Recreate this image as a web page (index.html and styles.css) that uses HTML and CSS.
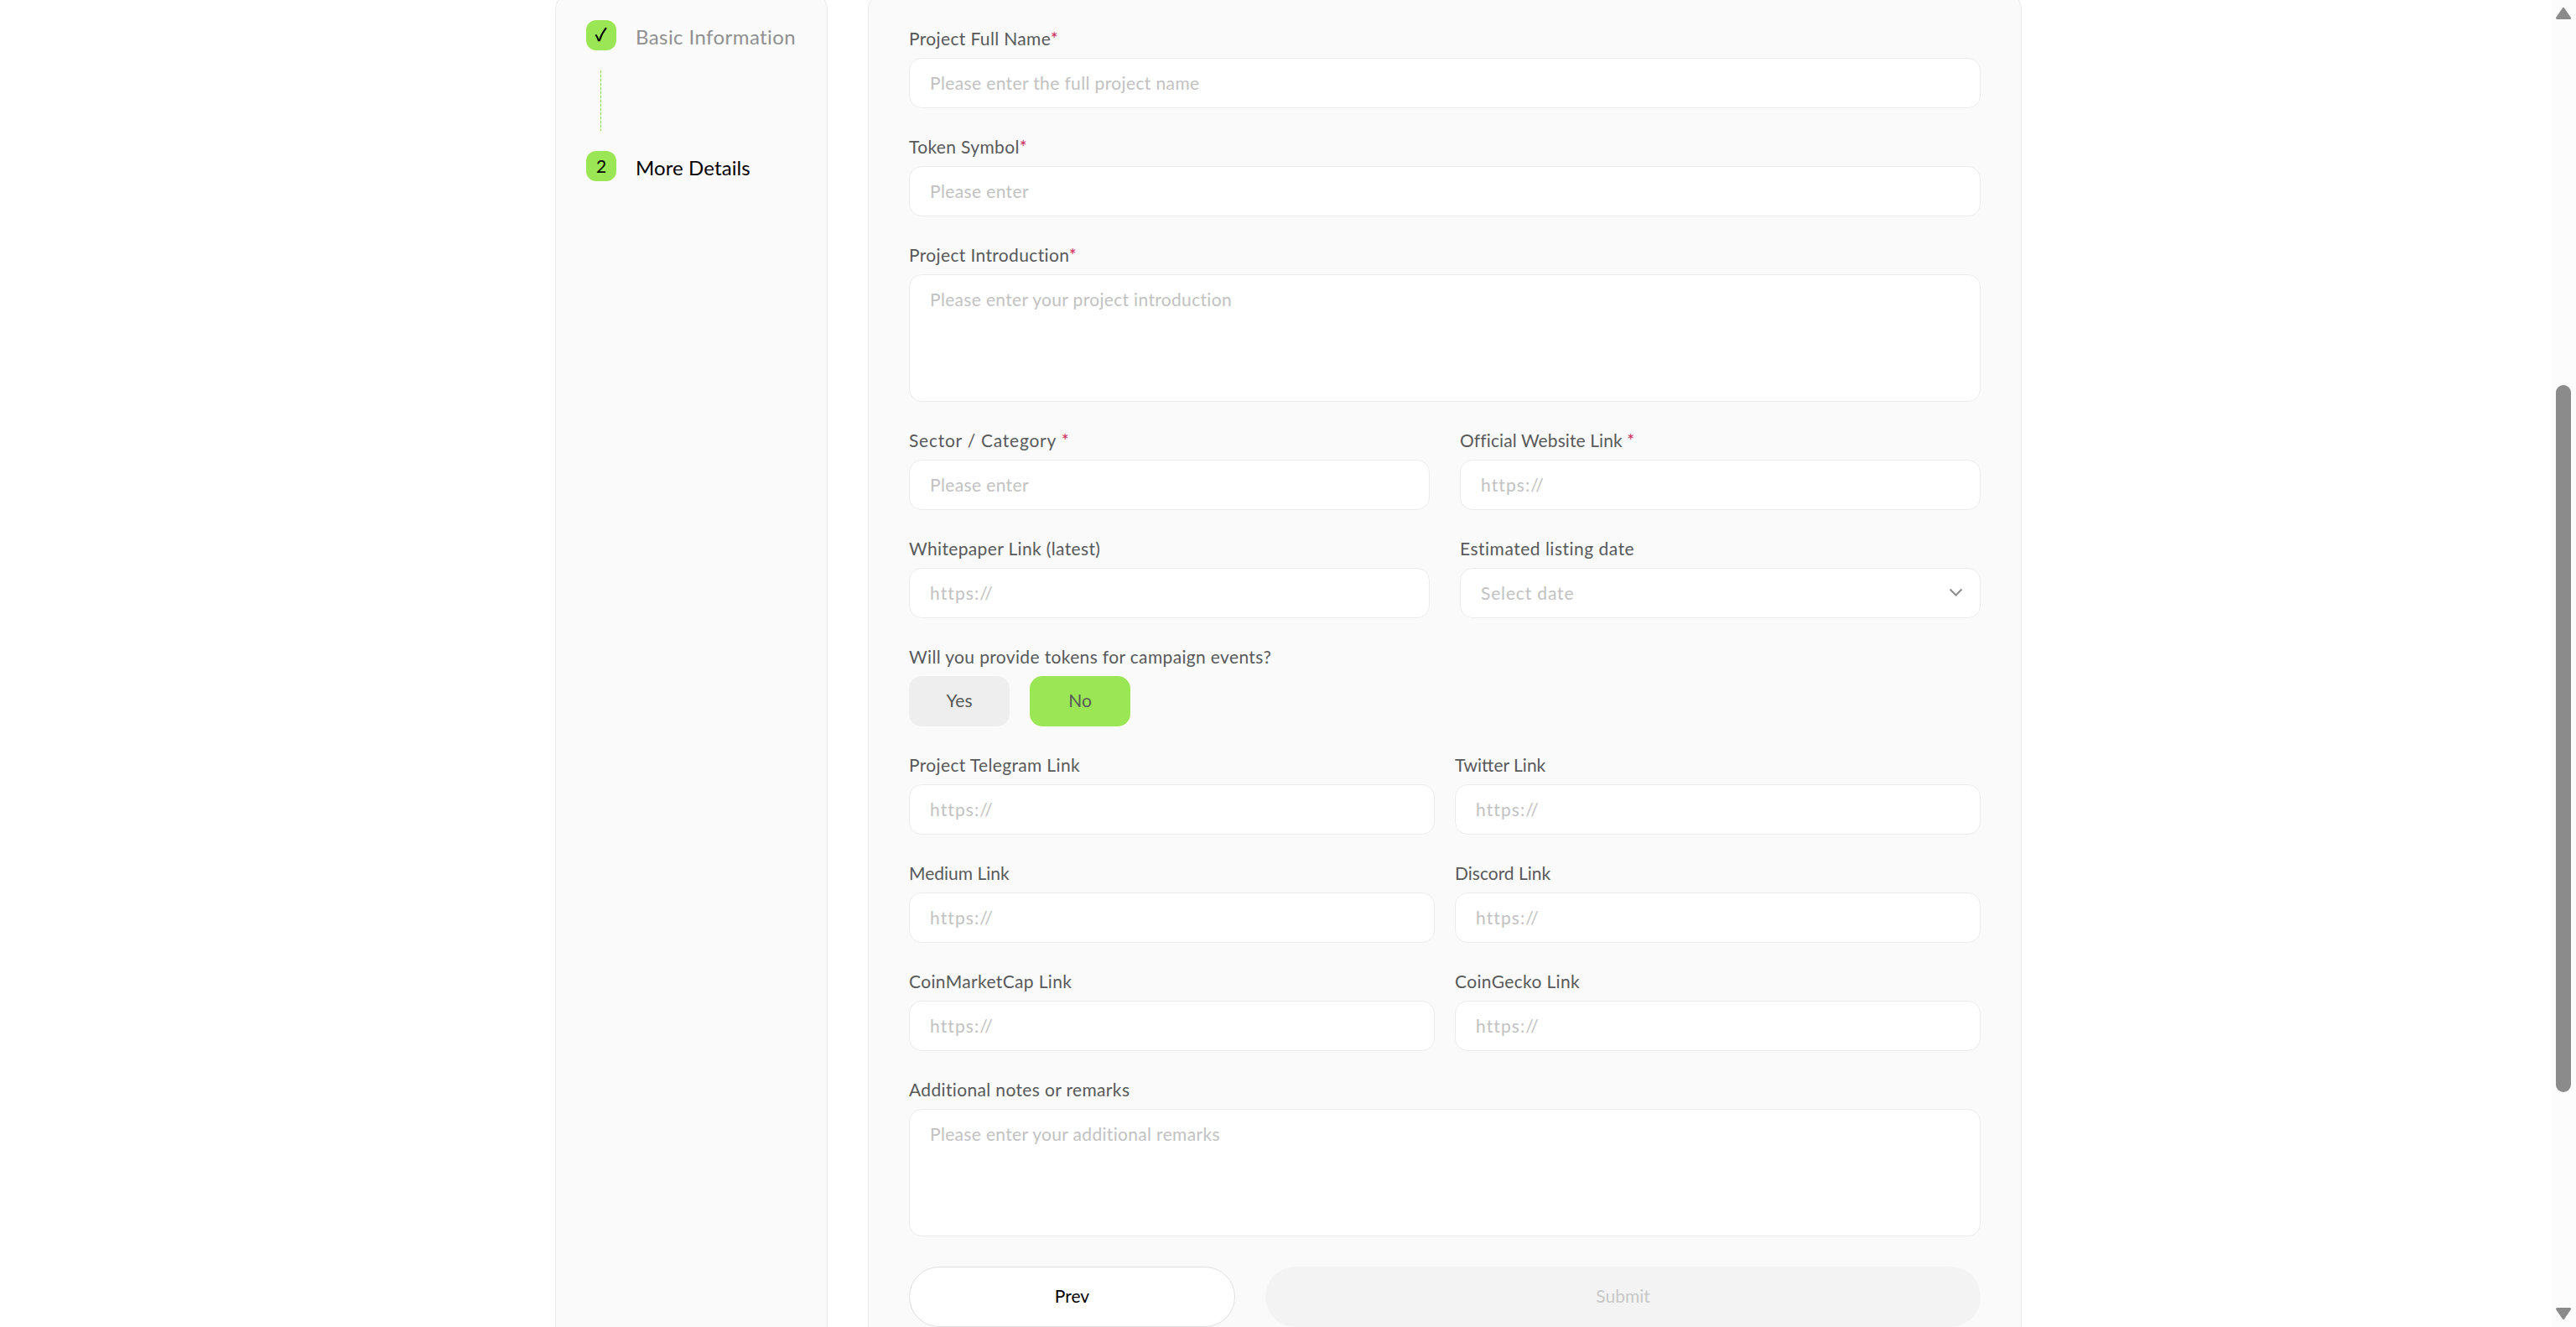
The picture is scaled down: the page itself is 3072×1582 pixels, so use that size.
FILE: index.html
```html
<!DOCTYPE html>
<html lang="en">
<head>
    <meta charset="UTF-8">
    <meta name="viewport" content="width=device-width, initial-scale=1.0">
    <title>Project Application</title>

    <link rel="stylesheet" href="styles.css">
</head>

<body>
    <main class="page">
        <aside class="sidebar">
            <div class="step">
                <span class="badge">
                    <svg width="18" height="20" viewBox="0 0 18 20"><path d="M2.3 10.3 Q4.4 12.6 5.8 17.2 L6.9 17.2 Q9.2 9.5 15 2.2" fill="none" stroke="#000" stroke-width="2"/></svg>
                </span>
                <span class="step-name done">Basic Information</span>
            </div>
            <div class="step-line"></div>
            <div class="step">
                <span class="badge">2</span>
                <span class="step-name">More Details</span>
            </div>
        </aside>

        <form class="form">
            <label class="field">
                <span class="label">Project Full Name<span class="req">*</span></span>
                <input class="input" type="text" placeholder="Please enter the full project name">
            </label>
            <label class="field">
                <span class="label">Token Symbol<span class="req">*</span></span>
                <input class="input" type="text" placeholder="Please enter">
            </label>
            <label class="field">
                <span class="label">Project Introduction<span class="req">*</span></span>
                <textarea class="input textarea" placeholder="Please enter your project introduction"></textarea>
            </label>

            <div class="row">
                <label class="field">
                    <span class="label wide">Sector / Category <span class="req">*</span></span>
                    <input class="input" type="text" placeholder="Please enter">
                </label>
                <label class="field">
                    <span class="label website-label">Official Website Link <span class="req">*</span></span>
                    <input class="input url" type="text" placeholder="https://">
                </label>
            </div>
            <div class="row">
                <label class="field">
                    <span class="label">Whitepaper Link (latest)</span>
                    <input class="input url" type="text" placeholder="https://">
                </label>
                <div class="field">
                    <span class="label date-label">Estimated listing date</span>
                    <div class="input select">
                        <span>Select date</span>
                        <svg width="17" height="11" viewBox="0 0 17 11"><path d="M1.5 1.5 L8.5 8.5 L15.5 1.5" fill="none" stroke="#8c8c8c" stroke-width="2"/></svg>
                    </div>
                </div>
            </div>

            <div class="field">
                <span class="label">Will you provide tokens for campaign events?</span>
                <div class="options">
                    <button class="option" type="button">Yes</button>
                    <button class="option active" type="button">No</button>
                </div>
            </div>

            <div class="row links">
                <label class="field">
                    <span class="label">Project Telegram Link</span>
                    <input class="input url" type="text" placeholder="https://">
                </label>
                <label class="field">
                    <span class="label snug">Twitter Link</span>
                    <input class="input url" type="text" placeholder="https://">
                </label>
            </div>
            <div class="row links">
                <label class="field">
                    <span class="label snug">Medium Link</span>
                    <input class="input url" type="text" placeholder="https://">
                </label>
                <label class="field">
                    <span class="label snug">Discord Link</span>
                    <input class="input url" type="text" placeholder="https://">
                </label>
            </div>
            <div class="row links">
                <label class="field">
                    <span class="label">CoinMarketCap Link</span>
                    <input class="input url" type="text" placeholder="https://">
                </label>
                <label class="field">
                    <span class="label">CoinGecko Link</span>
                    <input class="input url" type="text" placeholder="https://">
                </label>
            </div>

            <label class="field">
                <span class="label">Additional notes or remarks</span>
                <textarea class="input textarea" placeholder="Please enter your additional remarks"></textarea>
            </label>

            <div class="actions">
                <button class="btn prev" type="button">Prev</button>
                <button class="btn submit" type="button" disabled>Submit</button>
            </div>
        </form>
    </main>

    <div class="scrollbar">
        <svg width="18" height="14" viewBox="0 0 18 14"><path d="M9 1.5 L16.5 12.5 H1.5 Z" fill="#8b8b8b" stroke="#8b8b8b" stroke-width="3" stroke-linejoin="round"/></svg>
        <div class="thumb"></div>
        <svg class="down" width="18" height="14" viewBox="0 0 18 14"><path d="M9 12.5 L16.5 1.5 H1.5 Z" fill="#8b8b8b" stroke="#8b8b8b" stroke-width="3" stroke-linejoin="round"/></svg>
    </div>
</body>
</html>
```
FILE: styles.css
```css
* {
    box-sizing: border-box;
}
body {
    margin: 0px;
    height: 1582px;
    overflow: hidden;
    background: white;
    color: #58595a;
    font-family: Lato, "Open Sans", sans-serif;
    font-size: 21px;
    letter-spacing: 0.35px;
}
.page {
    display: flex;
    gap: 48px;
    width: 1748px;
    margin: -12px auto 0px;
}
.sidebar, .form {
    flex-shrink: 0;
    height: 1640px;
    background-color: #fafafa;
    border: 1px solid #ececec;
    border-radius: 24px;
}

/* steps */
.sidebar {
    width: 325px;
    padding: 35px 36px;
}
.step {
    display: flex;
    gap: 23px;
    height: 36px;
}
.badge {
    display: flex;
    align-items: center;
    justify-content: center;
    width: 36px;
    height: 36px;
    padding-bottom: 2px;
    border-radius: 12px;
    background-color: #9be654;
    color: black;
    letter-spacing: 0px;
}
.step-name {
    padding-top: 1px;
    font-size: 24px;
    line-height: 37px;
    color: black;
    letter-spacing: 0.1px;
    white-space: nowrap;
}
.done {
    color: #909090;
    letter-spacing: 0.42px;
}
.step-line {
    height: 72px;
    width: 1px;
    margin: 24px 17px;
    background: repeating-linear-gradient(#8bdc42 0px, #8bdc42 3px, #d9f3c2 3px, #d9f3c2 5px);
}

/* form */
.form {
    display: flex;
    flex-direction: column;
    gap: 34px;
    width: 1376px;
    padding: 45px 48px;
}
.field {
    display: flex;
    flex-direction: column;
    gap: 11px;
}
.label {
    height: 24px;
    line-height: 24px;
}
.snug {
    letter-spacing: 0px;
}
.wide {
    letter-spacing: 0.75px;
}
.website-label {
    letter-spacing: 0.1px;
}
.date-label {
    letter-spacing: 0.5px;
}
.req {
    color: #cb2b5b;
}
.row {
    display: grid;
    grid-template-columns: 1fr 1fr;
    gap: 36px;
}
.links {
    gap: 24px;
}
.input {
    width: 100%;
    height: 60px;
    padding: 0px 24px 2px;
    border: 1px solid #ececec;
    border-radius: 15px;
    background-color: white;
    font: inherit;
    letter-spacing: 0.37px;
    outline: none;
}
.input::placeholder {
    color: #c2c2c2;
}
.url {
    letter-spacing: 1.1px;
}
.textarea {
    display: block;
    height: 152px;
    padding: 14px 24px;
    line-height: 30px;
    letter-spacing: 0.33px;
    resize: none;
}
.select {
    display: flex;
    align-items: center;
    justify-content: space-between;
    padding-right: 20px;
    color: #c2c2c2;
    letter-spacing: 0.85px;
}
.options {
    display: flex;
    gap: 24px;
}
.option {
    width: 120px;
    height: 60px;
    padding: 0px 0px 3px;
    border: none;
    border-radius: 15px;
    background-color: #eeeeee;
    color: #58595a;
    font: inherit;
}
.active {
    background-color: #9be654;
}
.actions {
    display: flex;
    gap: 36px;
    margin-top: 2px;
}
.btn {
    height: 72px;
    padding: 0px 0px 3px;
    border: none;
    border-radius: 36px;
    font: inherit;
}
.prev {
    width: 389px;
    border: 1px solid #e0e0e0;
    background-color: white;
    color: black;
}
.submit {
    flex: 1;
    background-color: #f3f3f3;
    color: #c8c8c8;
}

/* page scrollbar */
.scrollbar {
    position: absolute;
    top: 0px;
    right: 0px;
    display: flex;
    flex-direction: column;
    align-items: center;
    width: 30px;
    height: 1582px;
    padding: 9px 0px;
    background-color: #fcfcfc;
}
.thumb {
    width: 18px;
    height: 843px;
    margin-top: 436px;
    border-radius: 9px;
    background-color: #8b8b8b;
}
.down {
    margin-top: auto;
}
```
